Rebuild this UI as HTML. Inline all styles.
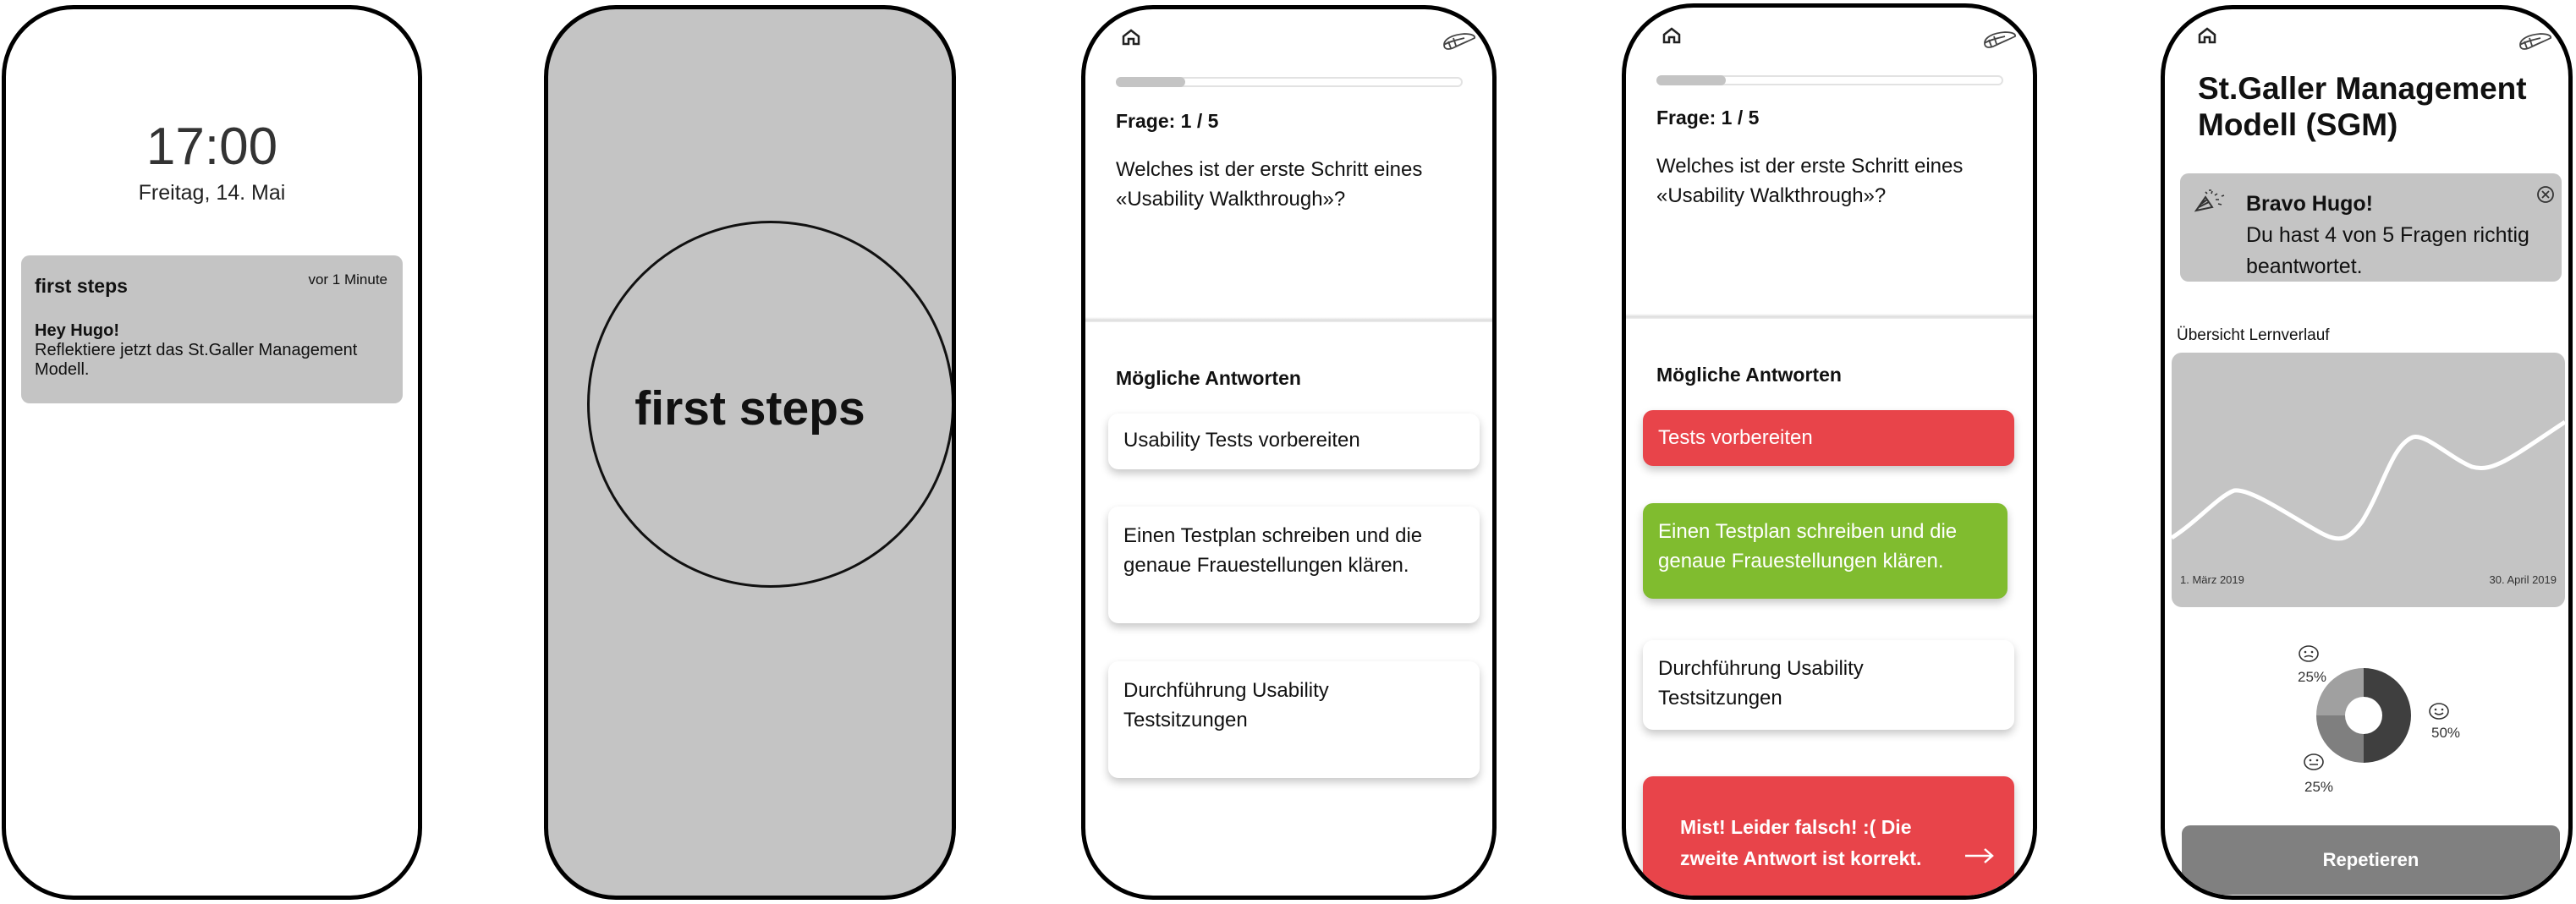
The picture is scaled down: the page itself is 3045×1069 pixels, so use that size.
<!DOCTYPE html>
<html><head><meta charset="utf-8"><style>
*{margin:0;padding:0;box-sizing:border-box}
body{width:3045px;height:1069px;background:#fff;position:relative;overflow:hidden;font-family:"Liberation Sans",sans-serif;color:#111}
.ph{position:absolute;border:5px solid #000;border-radius:85px;overflow:hidden;background:#fff}
.a{position:absolute;white-space:nowrap}
.card{position:absolute;background:#fff;border-radius:12px;box-shadow:0 5px 10px rgba(0,0,0,.22)}
.t24{font-size:24px;line-height:35px}
</style></head><body>

<!-- Phone 1 -->
<div class="ph" style="left:2px;top:6px;width:497px;height:1058px">
  <div class="a" style="left:0;width:487px;text-align:center;top:126px;font-size:62px;font-weight:300;line-height:74px;color:#333">17:00</div>
  <div class="a" style="left:0;width:487px;text-align:center;top:202px;font-size:25px;line-height:30px;color:#222">Freitag, 14. Mai</div>
  <div class="a" style="left:18px;top:291px;width:451px;height:175px;background:#c4c4c4;border-radius:10px">
    <div class="a" style="left:16px;top:22px;font-size:23px;font-weight:bold;line-height:28px">first steps</div>
    <div class="a" style="right:18px;top:18px;font-size:17px;line-height:22px">vor 1 Minute</div>
    <div class="a" style="left:16px;top:78px;font-size:20px;line-height:23px"><b>Hey Hugo!</b><br>Reflektiere jetzt das St.Galler Management<br>Modell.</div>
  </div>
</div>

<!-- Phone 2 -->
<div class="ph" style="left:643px;top:6px;width:487px;height:1058px;background:#c4c4c4">
  <div class="a" style="left:46px;top:250px;width:434px;height:434px;border:3px solid #111;border-radius:50%"></div>
  <div class="a" style="left:0;width:477px;text-align:center;top:437px;font-size:57px;font-weight:bold;line-height:70px">first steps</div>
</div>

<!-- Phone 3 -->
<div class="ph" style="left:1278px;top:6px;width:491px;height:1058px">
  <svg class="a" style="left:42px;top:22px" width="24" height="22" viewBox="0 0 24 22"><path d="M3 10 L12 3 L21 10 V19 H15 V13 H9 V19 H3 Z" fill="none" stroke="#222" stroke-width="2.5"/></svg>
  <svg class="a" style="left:420px;top:26px" width="44" height="24" viewBox="0 0 44 24"><path d="M4 16 C4 9 14 4 28 3 C36 3 41 5 40 8 C34 11 24 15 14 20 C8 22 4 21 4 16 Z M4 16 C10 12 20 10 28 8 M9 12 L12 20 M15 8 L18 17" fill="none" stroke="#444" stroke-width="1.8"/></svg>
  <div class="a" style="left:36px;top:80px;width:410px;height:12px;border:2px solid #e2e2e2;border-radius:6px"></div>
  <div class="a" style="left:36px;top:80px;width:82px;height:12px;background:#c4c4c4;border-radius:6px"></div>
  <div class="a" style="left:36px;top:118px;font-size:23px;font-weight:bold;line-height:28px">Frage: 1 / 5</div>
  <div class="a t24" style="left:36px;top:172px">Welches ist der erste Schritt eines<br>«Usability Walkthrough»?</div>
  <div class="a" style="left:0;top:364px;width:491px;height:6px;background:linear-gradient(#fff,#ddd 60%,#eee)"></div>
  <div class="a" style="left:36px;top:422px;font-size:23px;font-weight:bold;line-height:28px">Mögliche Antworten</div>
  <div class="card" style="left:27px;top:478px;width:439px;height:66px"><div class="a t24" style="left:18px;top:14px">Usability Tests vorbereiten</div></div>
  <div class="card" style="left:27px;top:588px;width:439px;height:138px"><div class="a t24" style="left:18px;top:17px">Einen Testplan schreiben und die<br>genaue Frauestellungen klären.</div></div>
  <div class="card" style="left:27px;top:771px;width:439px;height:138px"><div class="a t24" style="left:18px;top:17px">Durchführung Usability<br>Testsitzungen</div></div>
</div>

<!-- Phone 4 -->
<div class="ph" style="left:1917px;top:4px;width:491px;height:1060px">
  <svg class="a" style="left:42px;top:22px" width="24" height="22" viewBox="0 0 24 22"><path d="M3 10 L12 3 L21 10 V19 H15 V13 H9 V19 H3 Z" fill="none" stroke="#222" stroke-width="2.5"/></svg>
  <svg class="a" style="left:420px;top:26px" width="44" height="24" viewBox="0 0 44 24"><path d="M4 16 C4 9 14 4 28 3 C36 3 41 5 40 8 C34 11 24 15 14 20 C8 22 4 21 4 16 Z M4 16 C10 12 20 10 28 8 M9 12 L12 20 M15 8 L18 17" fill="none" stroke="#444" stroke-width="1.8"/></svg>
  <div class="a" style="left:36px;top:80px;width:410px;height:12px;border:2px solid #e2e2e2;border-radius:6px"></div>
  <div class="a" style="left:36px;top:80px;width:82px;height:12px;background:#c4c4c4;border-radius:6px"></div>
  <div class="a" style="left:36px;top:116px;font-size:23px;font-weight:bold;line-height:28px">Frage: 1 / 5</div>
  <div class="a t24" style="left:36px;top:170px">Welches ist der erste Schritt eines<br>«Usability Walkthrough»?</div>
  <div class="a" style="left:0;top:362px;width:491px;height:6px;background:linear-gradient(#fff,#ddd 60%,#eee)"></div>
  <div class="a" style="left:36px;top:420px;font-size:23px;font-weight:bold;line-height:28px">Mögliche Antworten</div>
  <div class="card" style="left:20px;top:476px;width:439px;height:66px;background:#e8444a"><div class="a t24" style="left:18px;top:15px;color:#fff">Tests vorbereiten</div></div>
  <div class="card" style="left:20px;top:586px;width:431px;height:113px;background:#80bc2f"><div class="a t24" style="left:18px;top:16px;color:#fff">Einen Testplan schreiben und die<br>genaue Frauestellungen klären.</div></div>
  <div class="card" style="left:20px;top:748px;width:439px;height:106px"><div class="a t24" style="left:18px;top:16px">Durchführung Usability<br>Testsitzungen</div></div>
  <div class="card" style="left:20px;top:909px;width:439px;height:170px;background:#e8444a"><div class="a" style="left:44px;top:42px;font-size:23px;font-weight:bold;line-height:37px;color:#fff">Mist! Leider falsch! :( Die<br>zweite Antwort ist korrekt.</div>
  <svg class="a" style="left:380px;top:84px" width="36" height="20" viewBox="0 0 36 20"><path d="M1 10 H33 M24 2 L33 10 L24 18" fill="none" stroke="#fff" stroke-width="2.5"/></svg></div>
</div>

<!-- Phone 5 -->
<div class="ph" style="left:2554px;top:6px;width:487px;height:1058px">
  <svg class="a" style="left:38px;top:20px" width="24" height="22" viewBox="0 0 24 22"><path d="M3 10 L12 3 L21 10 V19 H15 V13 H9 V19 H3 Z" fill="none" stroke="#222" stroke-width="2.5"/></svg>
  <svg class="a" style="left:416px;top:26px" width="44" height="24" viewBox="0 0 44 24"><path d="M4 16 C4 9 14 4 28 3 C36 3 41 5 40 8 C34 11 24 15 14 20 C8 22 4 21 4 16 Z M4 16 C10 12 20 10 28 8 M9 12 L12 20 M15 8 L18 17" fill="none" stroke="#444" stroke-width="1.8"/></svg>
  <div class="a" style="left:39px;top:72px;font-size:37px;font-weight:bold;line-height:43px">St.Galler Management<br>Modell (SGM)</div>
  <div class="a" style="left:18px;top:194px;width:451px;height:128px;background:#c4c4c4;border-radius:10px">
    <svg class="a" style="left:16px;top:18px" width="44" height="30" viewBox="0 0 44 30"><path d="M3 26 L14 10 L22 22 Z M6 22 L18 16 M9 18 L16 13" fill="none" stroke="#333" stroke-width="2"/><path d="M14 4 l2 2 M22 3 l-1 3 M28 6 l-3 2 M30 13 l-4 0 M33 19 l-4 -1 M36 8 l-3 1 M18 2 l3 0" stroke="#333" stroke-width="1.6"/></svg>
    <div class="a" style="left:78px;top:18px;font-size:25px;line-height:37px"><b>Bravo Hugo!</b><br>Du hast 4 von 5 Fragen richtig<br>beantwortet.</div>
    <svg class="a" style="left:420px;top:13px" width="24" height="24" viewBox="0 0 24 24"><circle cx="12" cy="12" r="9" fill="none" stroke="#333" stroke-width="1.8"/><path d="M8 8 L16 16 M16 8 L8 16" stroke="#333" stroke-width="1.8"/></svg>
  </div>
  <div class="a" style="left:14px;top:374px;font-size:19px;line-height:24px">Übersicht Lernverlauf</div>
  <div class="a" style="left:8px;top:406px;width:465px;height:301px;background:#c4c4c4;border-radius:12px;overflow:hidden">
    <svg class="a" style="left:0;top:0" width="465" height="301" viewBox="0 0 465 301"><path d="M0 219 C30 200 55 170 74 163 C95 160 150 200 180 215 C200 225 210 220 225 200 C250 160 260 110 285 100 C300 95 330 125 355 135 C380 142 400 125 465 82" fill="none" stroke="#fff" stroke-width="5"/></svg>
    <div class="a" style="left:10px;top:261px;font-size:13px;line-height:16px;color:#333">1. März 2019</div>
    <div class="a" style="right:10px;top:261px;font-size:13px;line-height:16px;color:#333">30. April 2019</div>
  </div>
  <div class="a" style="left:179px;top:779px;width:112px;height:112px;border-radius:50%;background:conic-gradient(#3f3f3f 0 50%,#7f7f7f 50% 75%,#a0a0a0 75% 100%)"></div>
  <div class="a" style="left:213px;top:813px;width:44px;height:44px;border-radius:50%;background:#fff"></div>
  <svg class="a" style="left:157px;top:751px" width="26" height="22" viewBox="0 0 26 22"><ellipse cx="13" cy="11" rx="11" ry="9" fill="none" stroke="#333" stroke-width="1.6"/><circle cx="9" cy="9" r="1.3" fill="#333"/><circle cx="17" cy="9" r="1.3" fill="#333"/><path d="M8 15 Q13 12 18 15" fill="none" stroke="#333" stroke-width="1.5"/></svg>
  <div class="a" style="left:157px;top:780px;font-size:17px;line-height:20px;color:#333">25%</div>
  <svg class="a" style="left:311px;top:819px" width="26" height="22" viewBox="0 0 26 22"><ellipse cx="13" cy="11" rx="11" ry="9" fill="none" stroke="#333" stroke-width="1.6"/><circle cx="9" cy="9" r="1.3" fill="#333"/><circle cx="17" cy="9" r="1.3" fill="#333"/><path d="M8 13 Q13 17 18 13" fill="none" stroke="#333" stroke-width="1.5"/></svg>
  <div class="a" style="left:315px;top:846px;font-size:17px;line-height:20px;color:#333">50%</div>
  <svg class="a" style="left:163px;top:879px" width="26" height="22" viewBox="0 0 26 22"><ellipse cx="13" cy="11" rx="11" ry="9" fill="none" stroke="#333" stroke-width="1.6"/><circle cx="9" cy="9" r="1.3" fill="#333"/><circle cx="17" cy="9" r="1.3" fill="#333"/><path d="M8 14 H18" fill="none" stroke="#333" stroke-width="1.5"/></svg>
  <div class="a" style="left:165px;top:910px;font-size:17px;line-height:20px;color:#333">25%</div>
  <div class="a" style="left:20px;top:965px;width:447px;height:82px;background:#808080;border-radius:10px;color:#fff;font-weight:bold;font-size:22px;line-height:82px;text-align:center">Repetieren</div>
</div>
</body></html>
